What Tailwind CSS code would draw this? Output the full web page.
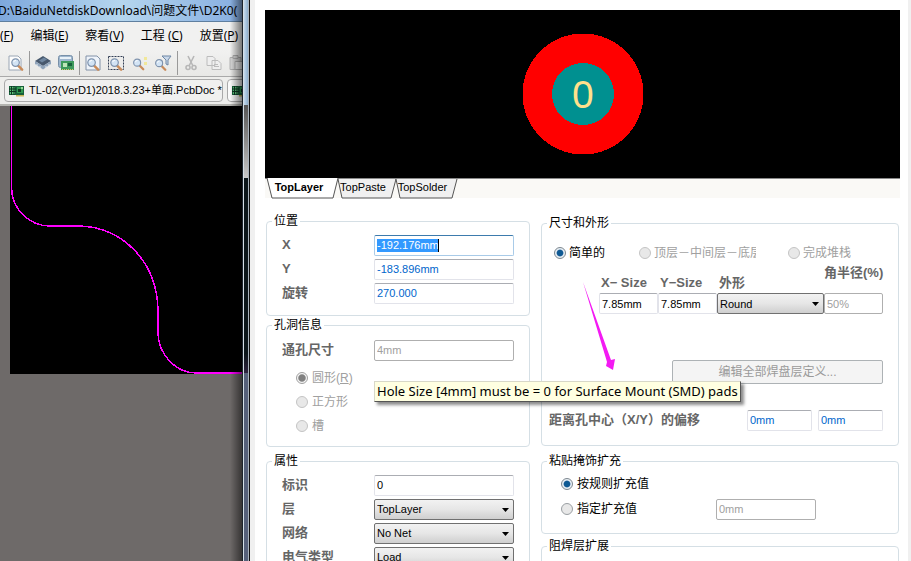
<!DOCTYPE html>
<html lang="zh-CN">
<head>
<meta charset="utf-8">
<title>焊盘属性</title>
<script src="https://cdn.jsdelivr.net/npm/@tailwindcss/browser@4"></script>
</head>
<body class="h-screen overflow-hidden bg-white text-xs text-black font-['Liberation_Sans','Noto_Sans_CJK_SC',sans-serif]">
<svg class="hidden">
  <symbol id="lens" viewBox="0 0 16 16"><path d="M9.500 10l4.500 4.500" stroke="#c98b5a" stroke-width="2.600" stroke-linecap="round"/><circle cx="7" cy="7" r="4" fill="#d3e4f5" stroke="#7f93ad" stroke-width="1.300"/><path d="M5 6.500a2.500 2.500 0 0 1 2.500-2" stroke="#fff" fill="none"/></symbol>
  <symbol id="board" viewBox="0 0 16 12"><path d="M0 1h15v9H0z" fill="#17603a"/><path d="M1 2h5v7H1z" fill="#5fc47b"/><path d="M0 4h7M0 6.500h7M2.500 1v9M5 1v9" stroke="#0d3521" stroke-width="1"/><path d="M8 2h6v6H8z" fill="#2f9a50"/><path d="M9 4h3v3H9z" fill="#103822"/><path d="M7 10h8v1.500H7z" fill="#c9b758"/><path d="M12 2h2v2h-2z" fill="#97d897"/></symbol>
  <symbol id="arrow" viewBox="0 0 7 4"><path d="M0 0h7L3.500 4z"/></symbol>
</svg>
<div class="relative flex h-full">

  <section class="relative flex w-[242px] shrink-0 flex-col overflow-hidden bg-[#6e6a69]">
    <header class="h-[22px] shrink-0 overflow-hidden whitespace-nowrap border-b border-[#5f7f9f] bg-linear-to-r from-[#7ea8dc] via-[#b5d6ee] to-[#86ade0] leading-[21px] font-['Noto_Sans','Noto_Sans_CJK_SC',sans-serif]"><span class="-ml-0.5">D:\BaiduNetdiskDownload\问题文件\D2K0(</span></header>
    <nav class="flex h-7 shrink-0 items-center gap-[17px] overflow-hidden whitespace-nowrap bg-[#f1f1f0] font-['Noto_Sans','Noto_Sans_CJK_SC',sans-serif]">
      <a href="#" class="-ml-3">件(<u>F</u>)</a><a href="#">编辑(<u>E</u>)</a><a href="#">察看(<u>V</u>)</a><a href="#">工程 (<u>C</u>)</a><a href="#">放置(<u>P</u>)</a>
    </nav>
    <div class="flex h-[27px] shrink-0 items-center gap-[5px] overflow-hidden border-b border-[#aaa] bg-linear-to-b from-[#f1f1f0] to-[#e8e8e6] pl-2">
      <button aria-label="预览" class="shrink-0"><svg class="size-4"><path d="M1 1h9l3 3v11H1z" fill="#fdfdfd" stroke="#9aa6b5"/><use href="#lens" x="1" y="1" width="15" height="15"/></svg></button>
      <i class="h-6 w-px shrink-0 bg-[#999]"></i>
      <div class="flex shrink-0 gap-[7px]">
        <button aria-label="元件"><svg class="size-4"><path d="M0 6l8-5 8 5-8 5z" fill="#47586d"/><path d="M0 6v3l8 5.500 8-5.500V6l-8 5z" fill="#8fa3ba"/><path d="M4 5.500l5-3 3 2-5 3z" fill="#6f86a0"/><path d="M2 9v2M5 11v2M11 11v2M14 9v2" stroke="#dfe8f0"/></svg></button>
        <button aria-label="电路板"><svg class="size-4"><rect x=".5" y=".5" width="14" height="12" rx="2" fill="#9fb7cf" stroke="#7890a8"/><path d="M2 3h11" stroke="#e8f1f8" stroke-width="2"/><path d="M3 6h13v9H3z" fill="#3f9a5c"/><path d="M5 8h4v4H5z" fill="#bfe6b8"/><path d="M10 8h4v3h-4z" fill="#17603a"/><path d="M4 14.500h11" stroke="#d9c66a" stroke-dasharray="1 1"/></svg></button>
      </div>
      <i class="h-6 w-px shrink-0 bg-[#999]"></i>
      <div class="flex shrink-0 gap-[7px]">
        <button aria-label="缩放文档"><svg class="size-4"><path d="M1 1h11l3 3v11H1z" fill="#eef3fa" stroke="#8292a8"/><use href="#lens" x="0" y="1" width="15" height="15"/></svg></button>
        <button aria-label="缩放区域"><svg class="size-4"><path d="M.5 1.500h15v13H.5z" fill="none" stroke="#333f55" stroke-dasharray="2 1"/><use href="#lens" x="0" y="1" width="15" height="15"/></svg></button>
        <button aria-label="缩放选中"><svg class="size-4"><use href="#lens" x="0" y="1" width="14" height="15"/><path d="M13 2h3v3h-3zM13 7h3v3h-3z" fill="#f1e89a"/></svg></button>
        <button aria-label="过滤缩放"><svg class="h-4 w-[18px]"><use href="#lens" x="-1" y="2" width="14" height="14"/><path d="M8 1h9l-3 4v5l-2-1V5z" fill="#c9d8ea" stroke="#6f87a5"/></svg></button>
      </div>
      <i class="h-6 w-px shrink-0 bg-[#999]"></i>
      <div class="flex shrink-0 gap-[7px]">
        <button aria-label="剪切"><svg class="size-4" fill="none" stroke="#b7b7b7" stroke-width="1.600"><path d="M5 1l5 10M11 1L6 11"/><circle cx="5" cy="12.500" r="2"/><circle cx="11" cy="12.500" r="2"/></svg></button>
        <button aria-label="复制"><svg class="size-4" fill="#efefef" stroke="#bcbcbc"><path d="M1 1.500h6l2 2v7H1zM6 5.500h6l3 3v6H6z"/><path d="M8 9.500h4M8 11.500h5"/></svg></button>
        <button aria-label="粘贴"><svg class="size-4" fill="#d8d8d8" stroke="#b0b0b0"><path d="M1 2.500h11v12H1z"/><path d="M4 .5h5v3H4z"/><path d="M6 6.500h8v8H6z" fill="#f2f2f2"/></svg></button>
      </div>
    </div>
    <div class="flex h-[29px] shrink-0 items-center gap-1 overflow-hidden border-b-2 border-[#b4b4b0] bg-[#eeeeec] pl-1">
      <button class="flex h-[23px] w-[219px] shrink-0 items-center gap-1 whitespace-nowrap rounded-sm border border-[#a9a9a9] bg-[#f0f0ef] pl-1 text-[11px]"><svg class="h-3 w-4 shrink-0"><use href="#board"/></svg>TL-02(VerD1)2018.3.23+单面.PcbDoc *</button>
      <button aria-label="文档" class="h-[23px] w-16 shrink-0 rounded-sm border border-[#a9a9a9] bg-[#fafafa]"><svg class="ml-1 h-3 w-4"><use href="#board"/></svg></button>
    </div>
    <div class="ml-2.5 h-[268px] shrink-0 bg-black">
      <svg class="h-full w-full" fill="none" stroke="#f0f" stroke-width="1.500" shape-rendering="crispEdges"><path d="M1.500 0V82C2 104 20 120 40 120H69C112 121 147 155 148 204V228C149 249 166 267 186 267H240"/></svg>
    </div>
    <div class="pointer-events-none absolute inset-y-0 right-0 w-3 bg-linear-to-r from-transparent to-black/50"></div>
  </section>

  <div class="flex w-2 shrink-0 border-x border-r-[#111] border-l-[#1c242c] bg-[#56617a]">
    <div class="flex-1 border-x border-r-[#a9b3bd] border-l-[#d5dfe6]">
      <div class="h-[105px] bg-linear-to-r from-[#c4d9ec] to-[#8eafcd]"></div>
      <div class="h-[73px] bg-linear-to-b from-[#555] to-[#c8c8c8]"></div>
      <div class="h-[195px] bg-linear-to-b from-[#0b1519] from-90% to-[#2f2440]"></div>
    </div>
  </div>

  <main class="min-w-0 flex-1 border-r-[3px] border-l-[5px] border-[#f0f0f0] bg-white pt-2.5 pr-2 pl-2.5">
    <div class="flex h-[168px] items-center justify-center bg-black">
      <svg class="size-[122px]" viewBox="0 0 122 122" shape-rendering="crispEdges"><circle cx="61" cy="61" r="60.500" fill="red"/><circle cx="61" cy="61" r="31" fill="#009090"/><text x="61" y="75" text-anchor="middle" font-size="39" fill="#ffe08c" class="font-['Noto_Sans',sans-serif]">0</text></svg>
    </div>
    <div class="flex h-5 border-t border-[#888] bg-[#faf9f6] pl-0.5 text-[11px]">
      <button class="relative z-10 h-5 w-[70px] pr-1.5 pb-1 font-bold"><svg class="absolute inset-0 -z-10 h-5 w-full overflow-visible"><path d="M0-1l5 20h61l5-20" fill="#fff" stroke="#555"/></svg>TopLayer</button>
      <button class="relative h-5 w-[58px] pr-1.5 pb-1"><svg class="absolute inset-0 h-5 w-full overflow-visible"><path d="M1 0l4 19h49l5-19" fill="#f0f0f0" stroke="#555"/></svg><span class="relative">TopPaste</span></button>
      <button class="relative h-5 w-[61px] pr-1.5 pb-1"><svg class="absolute inset-0 h-5 w-full overflow-visible"><path d="M1 0l4 19h52l5-19" fill="#f0f0f0" stroke="#555"/></svg><span class="relative">TopSolder</span></button>
    </div>

    <div class="flex gap-[11px] pt-[15px] pl-px pr-px">
      <div class="w-[264px] shrink-0">
        <fieldset class="rounded border border-[#d5dfe5] px-[15px] pt-1 pb-2.5">
          <legend class="-ml-2.5 px-0.5 leading-4">位置</legend>
          <div class="flex h-6 items-center"><label for="x" class="w-[92px] text-[13px] font-bold text-[#666]">X</label><div class="flex h-[21px] w-[140px] rounded-xs border border-[#a9cbe8] border-t-[#3d7bad] pl-0.5"><input id="x" value="-192.176mm" class="my-[3px] w-[62px] border-r border-black bg-[#3399ff] text-[11px] text-white outline-none"></div></div>
          <div class="flex h-6 items-center"><label for="y" class="w-[92px] text-[13px] font-bold text-[#666]">Y</label><input id="y" value="-183.896mm" class="h-[21px] w-[140px] rounded-xs border border-[#e2e3ea] border-t-[#abadb3] pl-0.5 text-[11px] text-[#0066cc]"></div>
          <div class="flex h-6 items-center"><label for="rot" class="w-[92px] text-[13px] font-bold text-[#666]">旋转</label><input id="rot" value="270.000" class="h-[21px] w-[140px] rounded-xs border border-[#e2e3ea] border-t-[#abadb3] pl-0.5 text-[11px] text-[#0066cc]"></div>
        </fieldset>
        <fieldset class="mt-px rounded border border-[#d5dfe5] px-[15px] pt-[5px] pb-2">
          <legend class="-ml-2.5 px-0.5 leading-4">孔洞信息</legend>
          <div class="mb-1 flex h-6 items-center"><label for="hole" class="w-[92px] text-[13px] font-bold text-[#666]">通孔尺寸</label><input id="hole" value="4mm" disabled class="h-[21px] w-[140px] rounded-xs border border-[#afafaf] pl-0.5 text-[11px] text-[#a0a0a0]"></div>
          <label class="ml-3.5 flex h-6 items-center gap-1 text-[#a0a0a0]"><input type="radio" name="shape" checked disabled class="size-3 appearance-none rounded-full border border-[#a0a0a0] bg-radial from-[#808080] from-45% to-[#f4f4f4] to-60%"><span>圆形(<u>R</u>)</span></label>
          <label class="ml-3.5 flex h-6 items-center gap-1 text-[#a0a0a0]"><input type="radio" name="shape" disabled class="size-3 appearance-none rounded-full border border-[#c4c4c4] bg-[#e8e8e8]">正方形</label>
          <label class="ml-3.5 flex h-6 items-center gap-1 text-[#a0a0a0]"><input type="radio" name="shape" disabled class="size-3 appearance-none rounded-full border border-[#c4c4c4] bg-[#e8e8e8]">槽</label>
        </fieldset>
        <fieldset class="mt-1.5 rounded border border-[#d5dfe5] px-[15px] pt-1 pb-2">
          <legend class="-ml-2.5 px-0.5 leading-4">属性</legend>
          <div class="flex h-6 items-center"><label for="id" class="w-[92px] text-[13px] font-bold text-[#666]">标识</label><input id="id" value="0" class="h-[21px] w-[140px] rounded-xs border border-[#e2e3ea] border-t-[#abadb3] pl-0.5 text-[11px]"></div>
          <div class="flex h-6 items-center"><label for="layer" class="w-[92px] text-[13px] font-bold text-[#666]">层</label><span class="relative"><select id="layer" class="block h-[21px] w-[140px] appearance-none rounded-xs border border-[#707070] bg-linear-to-b from-[#f2f2f2] via-[#e6e6e6] to-[#cfcfcf] pl-0.5 text-[11px]"><option>TopLayer</option></select><svg class="pointer-events-none absolute top-[9px] right-[5px] h-1 w-[7px]"><use href="#arrow"/></svg></span></div>
          <div class="flex h-6 items-center"><label for="net" class="w-[92px] text-[13px] font-bold text-[#666]">网络</label><span class="relative"><select id="net" class="block h-[21px] w-[140px] appearance-none rounded-xs border border-[#707070] bg-linear-to-b from-[#f2f2f2] via-[#e6e6e6] to-[#cfcfcf] pl-0.5 text-[11px]"><option>No Net</option></select><svg class="pointer-events-none absolute top-[9px] right-[5px] h-1 w-[7px]"><use href="#arrow"/></svg></span></div>
          <div class="flex h-6 items-center"><label for="elec" class="w-[92px] text-[13px] font-bold text-[#666]">电气类型</label><span class="relative"><select id="elec" class="block h-[21px] w-[140px] appearance-none rounded-xs border border-[#707070] bg-linear-to-b from-[#f2f2f2] via-[#e6e6e6] to-[#cfcfcf] pl-0.5 text-[11px]"><option>Load</option></select><svg class="pointer-events-none absolute top-[9px] right-[5px] h-1 w-[7px]"><use href="#arrow"/></svg></span></div>
        </fieldset>
      </div>

      <div class="min-w-0 flex-1 pt-0.5">
        <fieldset class="min-w-0 rounded border border-[#d5dfe5] pt-2.5 pr-[15px] pb-[13px] pl-[7px]">
          <legend class="-ml-0.5 px-0.5 leading-4">尺寸和外形</legend>
          <div class="flex h-6 items-center whitespace-nowrap pl-[5px]">
            <label class="flex w-[85px] items-center gap-[3px]"><input type="radio" name="stack" checked class="size-3 appearance-none rounded-full border border-[#7d8790] bg-radial from-[#0e5a94] from-40% to-[#e8f0f5] to-55%">简单的</label>
            <label class="flex w-[117px] items-center gap-[3px] overflow-hidden text-[#a0a0a0]"><input type="radio" name="stack" disabled class="size-3 shrink-0 appearance-none rounded-full border border-[#c4c4c4] bg-[#e8e8e8]">顶层－中间层－底层</label>
            <label class="ml-8 flex items-center gap-[3px] text-[#a0a0a0]"><input type="radio" name="stack" disabled class="size-3 appearance-none rounded-full border border-[#c4c4c4] bg-[#e8e8e8]">完成堆栈</label>
          </div>
          <div class="flex h-[49px] items-end justify-end text-[13px] font-bold leading-4 text-[#666]">
            <label class="w-[59px] whitespace-nowrap"><span class="pl-0.5">X− Size</span><input value="7.85mm" class="mt-0.5 block h-[21px] w-full rounded-xs border border-[#e2e3ea] border-t-[#abadb3] pl-0.5 text-[11px] font-normal text-black"></label>
            <label class="w-[59px] whitespace-nowrap"><span class="pl-0.5">Y−Size</span><input value="7.85mm" class="mt-0.5 block h-[21px] w-full rounded-xs border border-[#e2e3ea] border-t-[#abadb3] pl-0.5 text-[11px] font-normal text-black"></label>
            <label class="relative w-[107px]"><span class="pl-0.5">外形</span><select class="mt-0.5 block h-[21px] w-full appearance-none rounded-xs border border-[#707070] bg-linear-to-b from-[#f2f2f2] via-[#e6e6e6] to-[#cfcfcf] pl-0.5 text-[11px] font-normal text-black"><option>Round</option></select><svg class="pointer-events-none absolute right-[5px] bottom-2 h-1 w-[7px]"><use href="#arrow"/></svg></label>
            <label class="w-[59px] whitespace-nowrap">角半径(%)<input value="50%" disabled class="mt-3 block h-[21px] w-full rounded-xs border border-[#afafaf] pl-0.5 text-[11px] font-normal text-[#a0a0a0]"></label>
          </div>
          <div class="mt-[46px] flex justify-end"><button disabled class="h-6 w-[211px] rounded-xs border border-[#adb2b5] bg-[#f4f4f4] text-[#9a9a9a]">编辑全部焊盘层定义...</button></div>
          <div class="mt-6 flex h-6 items-center gap-1.5"><label for="offx" class="flex-1 text-[13px] font-bold text-[#666]">距离孔中心（X/Y）的偏移</label><input id="offx" value="0mm" class="h-[21px] w-[65px] rounded-xs border border-[#e2e3ea] border-t-[#abadb3] pl-0.5 text-[11px] text-[#0066cc]"><input aria-label="Y 偏移" value="0mm" class="h-[21px] w-[65px] rounded-xs border border-[#e2e3ea] border-t-[#abadb3] pl-0.5 text-[11px] text-[#0066cc]"></div>
        </fieldset>
        <fieldset class="mt-[7px] min-w-0 rounded border border-[#d5dfe5] pt-[3px] pr-[82px] pb-3 pl-[7px]">
          <legend class="-ml-0.5 px-0.5 leading-4">粘贴掩饰扩充</legend>
          <label class="ml-3 flex h-6 items-center gap-1"><input type="radio" name="paste" checked class="size-3 appearance-none rounded-full border border-[#7d8790] bg-radial from-[#0e5a94] from-40% to-[#e8f0f5] to-55%">按规则扩充值</label>
          <div class="mt-px ml-3 flex h-6 items-center justify-between"><label class="flex items-center gap-1"><input type="radio" name="paste" class="size-3 appearance-none rounded-full border border-[#9a9fa3] bg-[#e8e8e8]">指定扩充值</label><input aria-label="扩充值" value="0mm" disabled class="h-[21px] w-[100px] rounded-xs border border-[#afafaf] pl-0.5 text-[11px] text-[#a0a0a0]"></div>
        </fieldset>
        <fieldset class="mt-1 h-20 min-w-0 rounded border border-[#d5dfe5] pl-[7px]"><legend class="-ml-0.5 px-0.5 leading-4">阻焊层扩展</legend></fieldset>
      </div>
    </div>
  </main>

  <svg class="pointer-events-none absolute top-[280px] left-[580px] h-[94px] w-10"><path d="M3 2L27 82l-1 4 7 4 2-11-4 1z" fill="#f31af3"/></svg>
  <div role="tooltip" class="absolute top-[381px] left-[374px] h-[21px] whitespace-nowrap border border-[#d8d8c8] border-r-[#555] border-b-[#555] bg-[#ffffe1] px-0.5 text-[13px] leading-[19px] shadow-[3px_3px_3px_rgba(0,0,0,0.45)] font-['Noto_Sans',sans-serif]">Hole Size [4mm] must be = 0 for Surface Mount (SMD) pads</div>
</div>
</body>
</html>
